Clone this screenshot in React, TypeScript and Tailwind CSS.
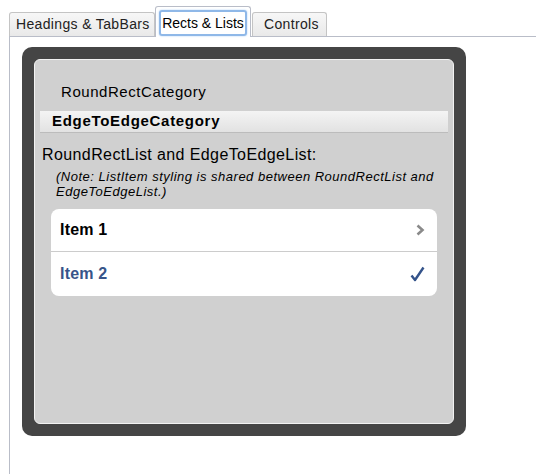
import React from "react";

const font = { fontFamily: '"Liberation Sans", Arial, sans-serif' };

function Tab({ label, active, pad }: { label: string; active?: boolean; pad?: string }) {
  if (active) {
    return (
      <div className="relative -mb-px flex h-[31px] w-[96px] shrink-0 items-start justify-center rounded-t-[3px] border border-b-0 border-[#b9bdc8] bg-white px-[3px] pt-[3px]">
        <div className="flex h-[26px] w-full items-center justify-center whitespace-nowrap rounded-[3px] border-2 border-[#8fb8e8] text-[14px] text-black shadow-[0_0_2px_#a9ccf5]">
          {label}
        </div>
      </div>
    );
  }
  return (
    <div className={`flex h-[24px] items-center whitespace-nowrap rounded-t-[3px] border border-b-0 border-[#c4c4c4] bg-gradient-to-b from-[#f7f7f7] to-[#e9e9e9] text-[14px] tracking-[0.35px] text-[#222] ${pad}`}>
      {label}
    </div>
  );
}

export default function App() {
  return (
    <div className="h-[474px] w-[536px] overflow-hidden bg-white" style={font}>
      <div className="flex items-end pl-[9px] pt-[6px]">
        <div className="w-[146px] shrink-0">
          <Tab label="Headings & TabBars" pad="pl-[6px]" />
        </div>
        <Tab label="Rects & Lists" active />
        <div className="ml-px w-[75px] shrink-0">
          <Tab label="Controls" pad="pl-[11px]" />
        </div>
      </div>
      <div className="ml-[9px] h-[438px] border-l border-t border-[#b9bdc8]">
        <div className="ml-3 mt-[10px] h-[389px] w-[444px] rounded-[10px] bg-[#454545] p-3">
          <div className="h-[365px] rounded-[6px] border border-[#f2f2f2] bg-[#d0d0d0] px-[5px]">
            <div className="mt-[23px] pl-[21px] text-[15px] leading-[18px] tracking-[0.55px] text-black">RoundRectCategory</div>
            <div className="mt-[10px] flex h-[22px] items-center border-b border-[#bcbcbc] bg-gradient-to-b from-[#f4f4f4] to-[#e2e2e2] pl-[12px] text-[15px] font-bold tracking-[0.7px] text-black">
              EdgeToEdgeCategory
            </div>
            <div className="mt-[12px] pl-[2px] text-[16px] leading-[19px] tracking-[0.4px] text-black">
              RoundRectList and EdgeToEdgeList:
            </div>
            <div className="mt-[5px] pl-[16px] pr-[6px] text-[13px] italic leading-[15px] tracking-[0.5px] text-black">
              (Note: ListItem styling is shared between RoundRectList and EdgeToEdgeList.)
            </div>
            <div className="ml-[11px] mt-[10px] w-[386px] overflow-hidden rounded-[8px] bg-white">
              <div className="flex h-[43px] items-center justify-between border-b border-[#cccccc] pl-[9px] pr-[12px]">
                <span className="text-[16px] font-bold tracking-[0.2px] text-black">Item 1</span>
                <svg width="9" height="12" viewBox="0 0 9 12">
                  <path d="M1.5 1.5 L6.5 6 L1.5 10.5" fill="none" stroke="#8a8a8a" strokeWidth="2.6" />
                </svg>
              </div>
              <div className="flex h-[44px] items-center justify-between pl-[9px] pr-[12px]">
                <span className="text-[16px] font-bold tracking-[0.2px] text-[#375489]">Item 2</span>
                <svg width="15" height="16" viewBox="0 0 15 16">
                  <path d="M1.5 9.5 L5 14 L13.5 1.5" fill="none" stroke="#34538a" strokeWidth="2.4" strokeLinejoin="round" />
                </svg>
              </div>
            </div>
          </div>
        </div>
      </div>
    </div>
  );
}
